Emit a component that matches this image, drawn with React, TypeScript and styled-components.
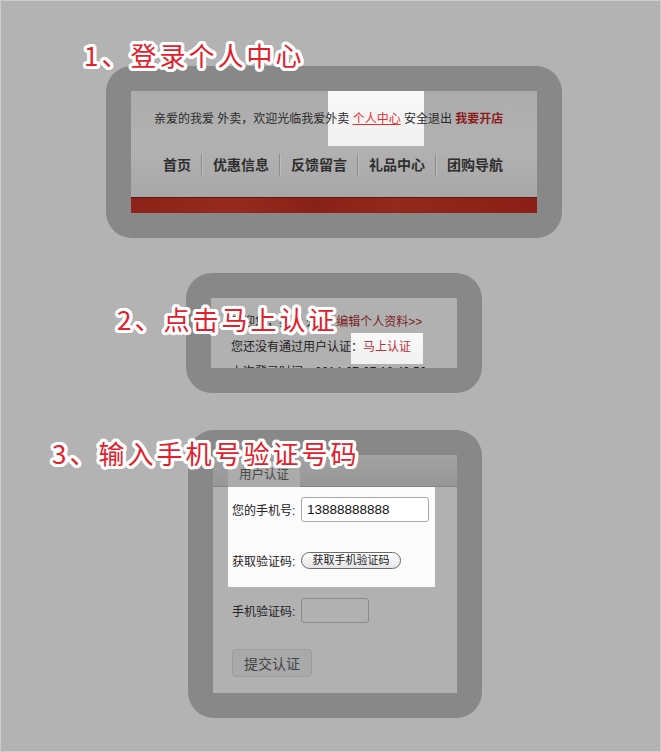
import React from 'react';
import styled, { createGlobalStyle } from 'styled-components';

const SANS = `"Liberation Sans", "Noto Sans CJK SC", sans-serif`;

// white outline round the red step captions
const outline = Array.from({ length: 24 }, (_, i) => {
  const a = (i / 24) * Math.PI * 2;
  return `${(3.2 * Math.cos(a)).toFixed(1)}px ${(3.2 * Math.sin(a)).toFixed(1)}px 0 #fff`;
}).join(', ');

const GlobalStyle = createGlobalStyle`
  html, body {
    margin: 0;
    padding: 0;
    background: #b3b3b3;
  }
  * {
    box-sizing: border-box;
  }
`;

const Page = styled.div`
  width: 661px;
  height: 752px;
  border: 1px solid #cdcdcd;
  background: #b3b3b3;
  display: flex;
  flex-direction: column;
  align-items: flex-start;
  overflow: hidden;
  font-family: ${SANS};
`;

const Card = styled.section<{ $top: number; $left: number; $w: number; $h: number }>`
  position: relative;
  margin: ${(p) => p.$top}px 0 0 ${(p) => p.$left}px;
  width: ${(p) => p.$w}px;
  height: ${(p) => p.$h}px;
  padding: 25px;
  background: #888888;
  border-radius: 26px;
`;

const Caption = styled.h2<{ $x: number; $y: number }>`
  position: absolute;
  left: ${(p) => p.$x}px;
  top: ${(p) => p.$y}px;
  z-index: 5;
  margin: 0;
  white-space: nowrap;
  font-family: "Noto Sans CJK SC", sans-serif;
  font-weight: 400;
  font-size: 26px;
  line-height: 30px;
  letter-spacing: 3px;
  color: #e2202b;
  text-shadow: ${outline};
`;

const Spot = styled.div<{ $x: number; $y: number; $w: number; $h: number }>`
  position: absolute;
  left: ${(p) => p.$x}px;
  top: ${(p) => p.$y}px;
  width: ${(p) => p.$w}px;
  height: ${(p) => p.$h}px;
  background: linear-gradient(#f9f9f9, #f1f1f1);
`;

/* step 1 */

const HeaderPanel = styled.div`
  position: relative;
  width: 406px;
  height: 122px;
  display: flex;
  flex-direction: column;
  background: linear-gradient(#acacac, #b2b2b2 45%, #a9a9a9 80%, #a2a2a2);
`;

const TopBar = styled.div`
  position: relative;
  height: 52px;
  padding-left: 23px;
  display: flex;
  align-items: center;
  font-size: 12px;
  color: #2a2a2a;
  white-space: pre;
`;

const UserLink = styled.a`
  color: #e8302c;
  text-decoration: underline;
`;

const ShopLink = styled.a`
  color: #8b1c1c;
  font-weight: 700;
`;

const Nav = styled.nav`
  height: 44px;
  padding-left: 21px;
  display: flex;
  align-items: center;
`;

const NavItem = styled.span<{ $first?: boolean }>`
  padding: 0 10px 0 11px;
  height: 22px;
  line-height: 22px;
  font-size: 14px;
  font-weight: 700;
  color: #2e2e2e;
  border-left: ${(p) => (p.$first ? 'none' : '1px solid #8d8d8d')};
  box-shadow: ${(p) => (p.$first ? 'none' : 'inset 1px 0 0 #bdbdbd')};
`;

const RedBand = styled.div`
  margin-top: auto;
  height: 16px;
  border-top: 1px solid #5e1610;
  background: linear-gradient(100deg, #8c2219 0%, #962a1f 25%, #8a2118 45%, #93281d 65%, #8b1f17 100%);
`;

/* step 2 */

const StatusPanel = styled.div`
  position: relative;
  width: 246px;
  height: 70px;
  padding: 12px 0 0 20px;
  overflow: hidden;
  background: #b1b1b1;
  font-size: 12px;
  color: #222;
`;

const Line = styled.div`
  position: relative;
  height: 25px;
  line-height: 25px;
  white-space: pre;
`;

const EditLink = styled.a`
  color: #7a1f1f;
  margin-left: 6px;
`;

const CertifyLink = styled.a`
  color: #b8333a;
`;

/* step 3 */

const FormPanel = styled.div`
  width: 244px;
  height: 238px;
  display: flex;
  flex-direction: column;
  background: #b1b1b1;
  font-size: 12px;
  color: #222;
`;

const TabStrip = styled.div`
  height: 32px;
  padding: 8px 0 0 15px;
  background: linear-gradient(#a2a2a2, #979797);
  border-bottom: 1px solid #858585;
`;

const Tab = styled.div`
  width: 72px;
  height: 24px;
  line-height: 24px;
  text-align: center;
  font-size: 12.5px;
  color: #4a4a4a;
  background: #ababab;
`;

const Highlighted = styled.div`
  margin-left: 15px;
  width: 207px;
  height: 100px;
  padding: 10px 0 0 4px;
  background: #fbfbfb;
`;

const Row = styled.div<{ $gap?: number; $indent?: number }>`
  display: flex;
  align-items: center;
  height: 25px;
  margin-top: ${(p) => p.$gap ?? 0}px;
  padding-left: ${(p) => p.$indent ?? 0}px;
`;

const Label = styled.span`
  width: 69px;
  white-space: nowrap;
`;

const TextInput = styled.input<{ $w: number; $light?: boolean }>`
  width: ${(p) => p.$w}px;
  height: 25px;
  padding: 0 5px;
  border: 1px solid ${(p) => (p.$light ? '#a8a8a8' : '#8a8a8a')};
  border-radius: 3px;
  background: ${(p) => (p.$light ? '#fff' : 'transparent')};
  font-family: "Liberation Sans", sans-serif;
  font-size: 13.5px;
  color: #111;
  outline: none;
`;

const PillButton = styled.button`
  width: 100px;
  height: 17px;
  padding: 0;
  border: 1px solid #6a6a6a;
  border-radius: 9px;
  background: linear-gradient(#ffffff, #e4e4e4);
  font-family: ${SANS};
  font-size: 11px;
  line-height: 15px;
  color: #222;
`;

const SubmitButton = styled.button`
  margin: 26px 0 0 19px;
  width: 80px;
  height: 28px;
  padding: 0;
  border: 1px solid #9c9c9c;
  border-radius: 4px;
  background: #a9a9a9;
  font-family: ${SANS};
  font-size: 14px;
  color: #444;
`;

const navItems = ['首页', '优惠信息', '反馈留言', '礼品中心', '团购导航'];

function App() {
  return (
    <>
      <GlobalStyle />
      <Page>
        <Card $top={65} $left={105} $w={456} $h={172}>
          <Caption $x={-22} $y={-26}>1、登录个人中心</Caption>
          <HeaderPanel>
            <Spot $x={197} $y={0} $w={96} $h={55} />
            <TopBar>
              亲爱的我爱 外卖，欢迎光临我爱外卖 <UserLink>个人中心</UserLink> 安全退出 <ShopLink>我要开店</ShopLink>
            </TopBar>
            <Nav>
              {navItems.map((item, i) => (
                <NavItem key={item} $first={i === 0}>
                  {item}
                </NavItem>
              ))}
            </Nav>
            <RedBand />
          </HeaderPanel>
        </Card>

        <Card $top={35} $left={185} $w={296} $h={120}>
          <Caption $x={-69} $y={31}>2、点击马上认证</Caption>
          <StatusPanel>
            <Spot $x={140} $y={35} $w={72} $h={31} />
            <Line>
              欢迎您，我爱 外卖<EditLink>编辑个人资料&gt;&gt;</EditLink>
            </Line>
            <Line>
              您还没有通过用户认证：<CertifyLink>马上认证</CertifyLink>
            </Line>
            <Line>上次登录时间：2014-07-07 16:40:50</Line>
          </StatusPanel>
        </Card>

        <Card $top={37} $left={187} $w={294} $h={288}>
          <Caption $x={-136} $y={8}>3、输入手机号验证号码</Caption>
          <FormPanel>
            <TabStrip>
              <Tab>用户认证</Tab>
            </TabStrip>
            <Highlighted>
              <Row>
                <Label>您的手机号:</Label>
                <TextInput $w={128} $light defaultValue="13888888888" />
              </Row>
              <Row $gap={26}>
                <Label>获取验证码:</Label>
                <PillButton>获取手机验证码</PillButton>
              </Row>
            </Highlighted>
            <Row $gap={11} $indent={19}>
              <Label>手机验证码:</Label>
              <TextInput $w={68} />
            </Row>
            <SubmitButton>提交认证</SubmitButton>
          </FormPanel>
        </Card>
      </Page>
    </>
  );
}

export default App;
